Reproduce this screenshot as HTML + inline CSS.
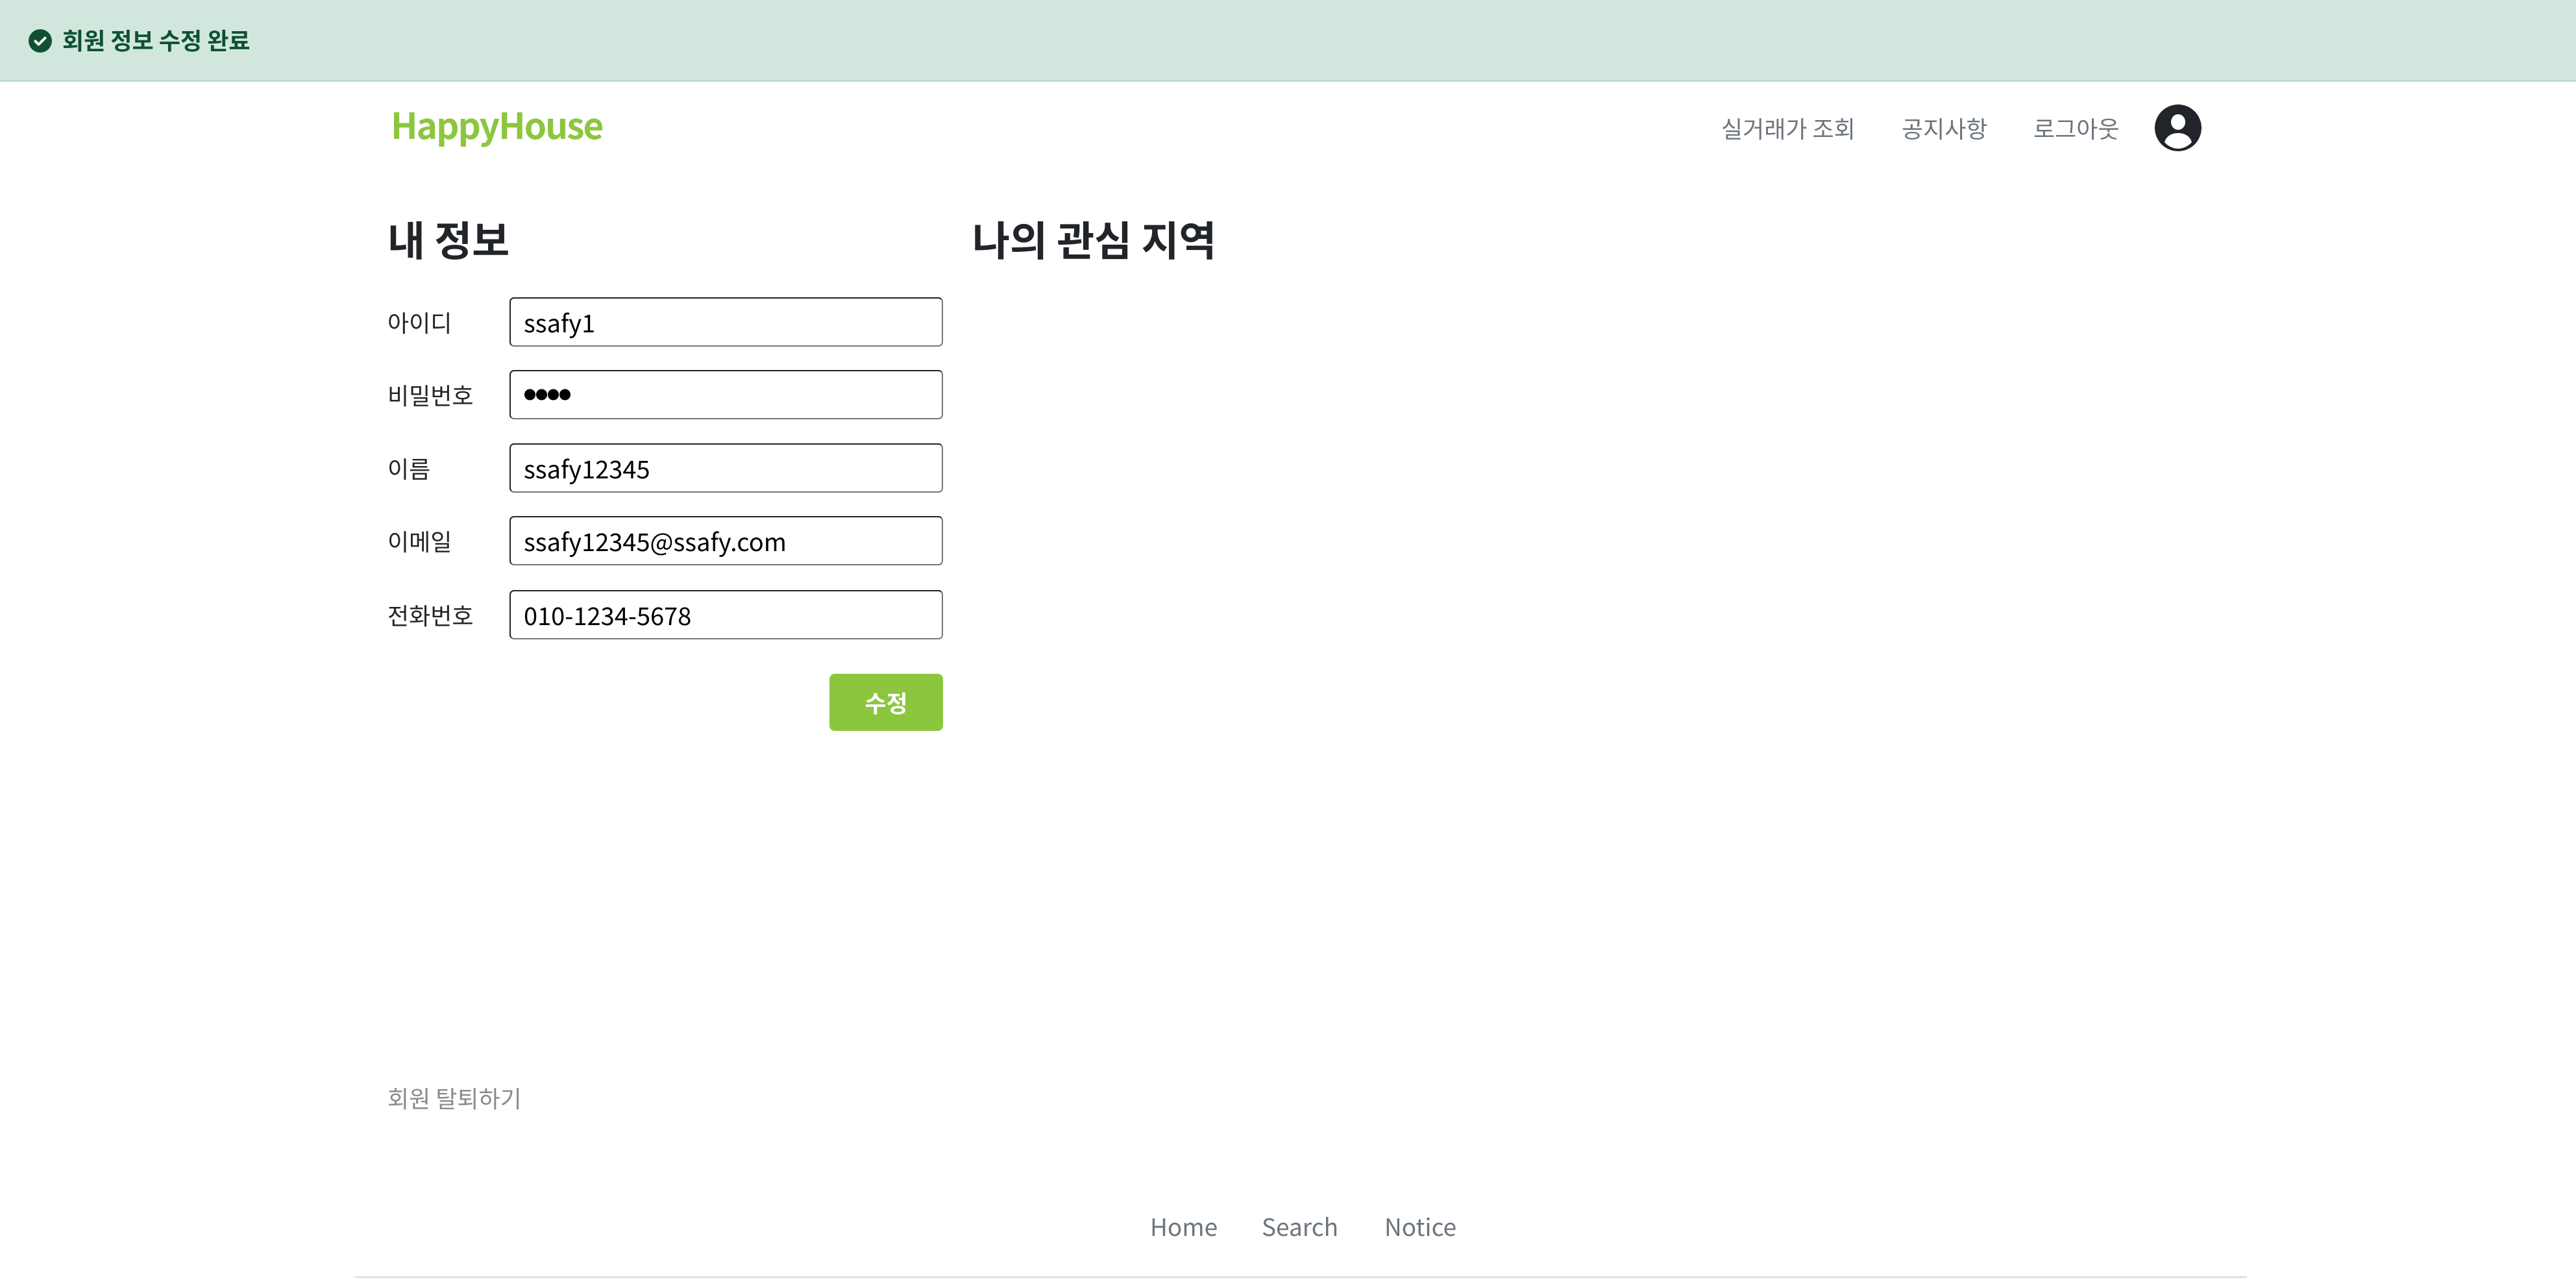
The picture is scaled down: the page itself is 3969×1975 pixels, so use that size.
<!DOCTYPE html>
<html><head><meta charset="utf-8"><style>
*{margin:0;padding:0;box-sizing:border-box}
body{width:3969px;height:1975px;background:#fff;position:relative;overflow:hidden;font-family:"Noto Sans CJK KR","Liberation Sans",sans-serif;color:#212529}
.a{position:absolute;white-space:nowrap;line-height:1}
.banner{position:absolute;left:0;top:0;width:3969px;height:126px;background:#d1e7dd;border-bottom:3px solid #badbcc}
.lbl{position:absolute;left:597px;font-size:36px;color:#212529;line-height:1}
.inp{position:absolute;left:785px;width:668px;height:76px;border:2px solid #222;border-bottom-color:#777;border-right-color:#777;border-radius:7px;font-size:38px;padding-left:20px;line-height:72px;color:#000}
.nav{font-size:36px;color:#6c757d}
.ft{font-size:37px;color:#6c757d}
</style></head><body>
<div class="banner"></div>
<svg class="a" style="left:44px;top:45px" width="36" height="36" viewBox="0 0 36 36"><circle cx="18" cy="18" r="18" fill="#0f5132"/><path d="M10.5 18.5l5 5 10-10" stroke="#fff" stroke-width="4" fill="none" stroke-linecap="round" stroke-linejoin="round"/></svg>
<div class="a" style="left:96px;top:43px;font-size:36px;font-weight:700;color:#0f5132">회원 정보 수정 완료</div>

<div class="a" style="left:602px;top:163px;font-size:55px;color:#8cc63f;font-weight:700;letter-spacing:-2px">HappyHouse</div>
<div class="a nav" style="left:2652px;top:179px">실거래가 조회</div>
<div class="a nav" style="left:2930px;top:179px">공지사항</div>
<div class="a nav" style="left:3133px;top:179px">로그아웃</div>
<svg class="a" style="left:3320px;top:161px" width="72" height="72" viewBox="0 0 72 72"><defs><clipPath id="c"><circle cx="36" cy="36" r="36"/></clipPath></defs><circle cx="36" cy="36" r="36" fill="#212529"/><g clip-path="url(#c)" fill="#fff"><ellipse cx="36" cy="27" rx="11" ry="12"/><path d="M15 58c3-10 12-14 21-14s18 4 21 14c-5 6-13 10-21 10s-16-4-21-10z"/></g></svg>

<div class="a" style="left:597px;top:336px;font-size:63px;font-weight:700">내 정보</div>
<div class="a" style="left:1498px;top:336px;font-size:63px;font-weight:700">나의 관심 지역</div>

<div class="lbl" style="top:478px">아이디</div>
<div class="inp" style="top:458px">ssafy1</div>
<div class="lbl" style="top:590px">비밀번호</div>
<div class="inp" style="top:570px;font-size:19px;letter-spacing:-1px">●●●●</div>
<div class="lbl" style="top:703px">이름</div>
<div class="inp" style="top:683px">ssafy12345</div>
<div class="lbl" style="top:815px">이메일</div>
<div class="inp" style="top:795px">ssafy12345@ssafy.com</div>
<div class="lbl" style="top:929px">전화번호</div>
<div class="inp" style="top:909px">010-1234-5678</div>

<div class="a" style="left:1278px;top:1038px;width:175px;height:88px;background:#8cc63f;border-radius:8px;color:#fff;font-size:36px;font-weight:700;line-height:88px;text-align:center">수정</div>

<div class="a" style="left:597px;top:1673px;font-size:36px;color:#8a8a8a">회원 탈퇴하기</div>

<div class="a ft" style="left:1772px;top:1870px">Home</div>
<div class="a ft" style="left:1944px;top:1870px">Search</div>
<div class="a ft" style="left:2133px;top:1870px">Notice</div>
<div class="a" style="left:547px;top:1966px;width:2915px;height:3px;background:#dee2e6"></div>
</body></html>
